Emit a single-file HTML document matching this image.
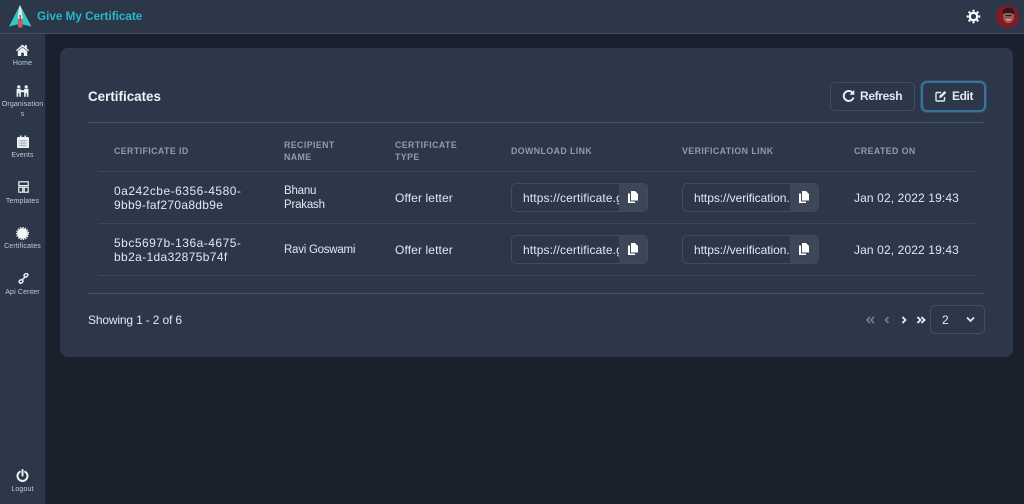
<!DOCTYPE html>
<html><head><meta charset="utf-8">
<style>
*{box-sizing:border-box}
html,body{margin:0;padding:0;width:1024px;height:504px;overflow:hidden;background:#1a202c;font-family:"Liberation Sans",sans-serif;color:#e2e8f0}
.a{position:absolute;white-space:nowrap}
.nav{position:absolute;left:0;width:45px;text-align:center;font-size:7px;line-height:10px;color:#c3ccd8;letter-spacing:.15px}
.nav svg{position:absolute;left:16px;top:0}
.th{position:absolute;font-size:8.8px;font-weight:bold;letter-spacing:.42px;line-height:11.5px;color:#8f9bae;white-space:nowrap}
.td{position:absolute;font-size:12px;line-height:14px;color:#e2e8f0;white-space:nowrap;letter-spacing:.12px}
.hr{position:absolute;height:1px;background:#38495a}
.inp{position:absolute;width:137px;height:29px;border:1px solid #414c5e;border-radius:5px;overflow:hidden;font-size:12px;line-height:29px;color:#e2e8f0;padding-left:11px;white-space:nowrap;letter-spacing:.12px}
.inp b{position:absolute;right:0;top:0;bottom:0;width:28px;background:#3d4758;border-radius:0 5px 5px 0}
.inp svg{position:absolute;right:8px;top:6px}
</style></head><body>

<div class="a" style="left:0;top:0;width:1024px;height:34px;background:#2c3849;border-bottom:1px solid #465062"></div>
<svg class="a" style="left:9px;top:5px" width="23" height="23" viewBox="0 0 23 23">
<path d="M11 0L0 21.500L8 19.500H14L22.500 21.500Z" fill="#2cc9c6"/>
<path d="M11 0C9.500 4 9 8 9 13V22.500H13.500V13C13.500 8 12.800 4 11 0Z" fill="#dfe6e4"/>
<rect x="9" y="14" width="4.500" height="8.500" fill="#c65a68"/><rect x="10.500" y="10" width="1.500" height="5" fill="#b8404f"/>
</svg>
<div class="a" style="left:37px;top:9px;font-size:11.7px;line-height:15px;font-weight:bold;color:#28b6cb">Give My Certificate</div>

<svg class="a" style="left:966px;top:9px" width="15" height="15" viewBox="0 0 15 15"><circle cx="7.500" cy="7.500" r="3.700" fill="#2c3849" stroke="#fff" stroke-width="2.200"/><g stroke="#fff" stroke-width="2.200"><path d="M7.500 .7v2M7.500 12.300v2M.7 7.500h2M12.300 7.500h2M2.700 2.700l1.400 1.400M10.900 10.900l1.400 1.400M2.700 12.300l1.400-1.400M10.900 4.100l1.400-1.400"/></g></svg>
<svg class="a" style="left:996px;top:5px" width="23" height="23" viewBox="0 0 23 23"><circle cx="11.500" cy="11.500" r="11.500" fill="#851826"/><ellipse cx="12.500" cy="11.500" rx="5.500" ry="6.800" fill="#9a5c50"/><path d="M6.500 9C6 4 10 2.500 13 2.500C17 2.500 19 6 18.500 9.500C15 7.500 10 7.500 6.500 9Z" fill="#2a1a1c"/><path d="M9.500 10.500h6" stroke="#2a1a1c" stroke-width="1.100"/><path d="M10 14.800h5" stroke="#e5d5cc" stroke-width="1"/></svg>

<!-- sidebar -->
<div class="a" style="left:0;top:34px;width:46px;height:470px;background:#2c3849;border-right:1px solid #1f2735"></div>

<div class="nav" style="top:44px;height:26px"><svg width="13" height="12" viewBox="0 0 13 12"><path d="M6.500 .5L0 6.200l.9 1L6.500 2.600l5.600 4.600.9-1L10.800 4.300V1H9v1.700Z" fill="#eef1f5"/><path d="M6.500 3.400L1.800 7.300V12H5.200V8.800h2.600V12h3.400V7.300Z" fill="#eef1f5"/></svg><div style="padding-top:14.500px">Home</div></div>

<div class="nav" style="top:85px;height:36px"><svg width="13" height="12" viewBox="0 0 13 12"><g fill="#eef1f5"><circle cx="2.800" cy="1.800" r="1.600"/><circle cx="10.200" cy="1.800" r="1.600"/><rect x=".6" y="3.800" width="4.200" height="4.400"/><rect x="8.200" y="3.800" width="4.200" height="4.400"/><rect x="3.500" y="5.200" width="6" height="2"/><rect x=".6" y="8" width="1.600" height="3.800"/><rect x="10.800" y="8" width="1.600" height="3.800"/><rect x="3.300" y="8" width="1.600" height="3.800"/><rect x="8.100" y="8" width="1.600" height="3.800"/></g></svg><div style="padding-top:14.500px;line-height:10.500px">Organisation<br>s</div></div>

<div class="nav" style="top:135px;height:26px"><svg width="12" height="13" viewBox="0 0 12 13" style="left:17px"><path d="M1 2h2V.5h1.500V2h3V.5H9V2h2a1 1 0 0 1 1 1v9a1 1 0 0 1-1 1H1a1 1 0 0 1-1-1V3a1 1 0 0 1 1-1Z" fill="#eef1f5"/><path d="M1.500 5.500h9M1.500 8h9M1.500 10.500h9M4 5v7M6 5v7M8 5v7" stroke="#8a94a4" stroke-width=".5"/></svg><div style="padding-top:16px">Events</div></div>

<div class="nav" style="top:181px;height:26px"><svg width="11" height="12" viewBox="0 0 11 12" style="left:17.500px"><g fill="none" stroke="#eef1f5" stroke-width="1.200"><rect x=".8" y=".8" width="9.400" height="3.800"/><rect x=".8" y="6.200" width="4" height="5"/><rect x="6.200" y="6.200" width="4" height="5"/></g></svg><div style="padding-top:15.500px">Templates</div></div>

<div class="nav" style="top:227px;height:26px"><svg width="13" height="13" viewBox="0 0 13 13"><circle cx="6.500" cy="6.500" r="5.400" fill="#f2f5f8"/><circle cx="6.500" cy="6.500" r="6.100" fill="none" stroke="#f2f5f8" stroke-width="1.100" stroke-dasharray="1.300 1.300"/></svg><div style="padding-top:15px">Certificates</div></div>

<div class="nav" style="top:273px;height:26px"><svg width="11" height="11" viewBox="0 0 12 12" style="left:17.500px"><g fill="none" stroke="#e6ebf1" stroke-width="1.700"><rect x="6.600" y=".8" width="4.200" height="3.200" rx="1.400" transform="rotate(-40 8.700 2.400)"/><rect x="1.200" y="7.600" width="4.200" height="3.200" rx="1.400" transform="rotate(-40 3.300 9.200)"/><path d="M4.500 7.500L7.500 4.500"/></g></svg><div style="padding-top:14.500px">Api Center</div></div>

<div class="nav" style="top:469px;height:26px"><svg width="13" height="13" viewBox="0 0 13 13"><path d="M3.800 2.800a5 5 0 1 0 5.400 0" fill="none" stroke="#f0f3f7" stroke-width="2" stroke-linecap="round"/><path d="M6.500 1v5.500" stroke="#f0f3f7" stroke-width="2" stroke-linecap="round"/></svg><div style="padding-top:15.500px">Logout</div></div>

<!-- panel -->
<div class="a" style="left:60px;top:48px;width:953px;height:309px;background:#2c3849;border-radius:8px"></div>
<div class="a" style="left:88px;top:88px;font-size:13.400px;line-height:17px;font-weight:bold;color:#edf2f7">Certificates</div>

<div class="a" style="left:830px;top:82px;width:85px;height:29px;border:1px solid #434e60;border-radius:5px"></div>
<svg class="a" style="left:842px;top:89px" width="13" height="14" viewBox="0 0 13 14"><path d="M10.800 4A5 5 0 1 0 11.500 8.500" fill="none" stroke="#edf2f7" stroke-width="1.900"/><path d="M12.300 1V5.800H7.500Z" fill="#edf2f7"/></svg>
<div class="a" style="left:860px;top:89px;font-size:12px;line-height:15px;font-weight:bold;color:#e2e8f0;letter-spacing:-.35px">Refresh</div>

<div class="a" style="left:921px;top:81px;width:65px;height:31px;border:2px solid #3d7399;border-radius:6px;box-shadow:0 0 0 1px #2f4f68"></div>
<svg class="a" style="left:935px;top:90px" width="12" height="12" viewBox="0 0 12 12"><path d="M6 2.500H2a1 1 0 0 0-1 1V10a1 1 0 0 0 1 1h6.500a1 1 0 0 0 1-1V7" fill="none" stroke="#e2e8f0" stroke-width="1.400"/><path d="M4.500 5.800L9.500 1l1.800 1.700L6.300 7.600 4.200 8Z" fill="#e2e8f0"/></svg>
<div class="a" style="left:952px;top:89px;font-size:12px;line-height:15px;font-weight:bold;color:#e2e8f0;letter-spacing:-.4px">Edit</div>

<div class="hr" style="left:88px;top:122px;width:897px;background:#445263"></div>

<div class="th" style="left:114px;top:146px">CERTIFICATE ID</div>
<div class="th" style="left:284px;top:140px">RECIPIENT<br>NAME</div>
<div class="th" style="left:395px;top:140px">CERTIFICATE<br>TYPE</div>
<div class="th" style="left:511px;top:146px">DOWNLOAD LINK</div>
<div class="th" style="left:682px;top:146px">VERIFICATION LINK</div>
<div class="th" style="left:854px;top:146px">CREATED ON</div>

<div class="hr" style="left:98px;top:171px;width:877px"></div>
<div class="hr" style="left:98px;top:223px;width:877px"></div>
<div class="hr" style="left:98px;top:275px;width:877px"></div>

<div class="td" style="left:114px;top:184px;letter-spacing:.49px">0a242cbe-6356-4580-<br><span style="letter-spacing:.3px">9bb9-faf270a8db9e</span></div>
<div class="td" style="left:284px;top:184px;font-size:11.5px;letter-spacing:-.2px">Bhanu<br>Prakash</div>
<div class="td" style="left:395px;top:191px">Offer letter</div>
<div class="inp" style="left:511px;top:183px">https://certificate.g<b></b><svg width="13" height="14" viewBox="0 0 13 14"><path d="M5 1h4l3 3v6.500H5Z" fill="#fff"/><path d="M2 3.500h2V11.500h5V13H2Z" fill="#fff"/></svg></div>
<div class="inp" style="left:682px;top:183px;letter-spacing:-.05px">https://verification.<b></b><svg width="13" height="14" viewBox="0 0 13 14"><path d="M5 1h4l3 3v6.500H5Z" fill="#fff"/><path d="M2 3.500h2V11.500h5V13H2Z" fill="#fff"/></svg></div>
<div class="td" style="left:854px;top:191px">Jan 02, 2022 19:43</div>

<div class="td" style="left:114px;top:236px;letter-spacing:.49px">5bc5697b-136a-4675-<br><span style="letter-spacing:.36px">bb2a-1da32875b74f</span></div>
<div class="td" style="left:284px;top:243px;font-size:11.5px;letter-spacing:-.25px">Ravi Goswami</div>
<div class="td" style="left:395px;top:243px">Offer letter</div>
<div class="inp" style="left:511px;top:235px">https://certificate.g<b></b><svg width="13" height="14" viewBox="0 0 13 14"><path d="M5 1h4l3 3v6.500H5Z" fill="#fff"/><path d="M2 3.500h2V11.500h5V13H2Z" fill="#fff"/></svg></div>
<div class="inp" style="left:682px;top:235px;letter-spacing:-.05px">https://verification.<b></b><svg width="13" height="14" viewBox="0 0 13 14"><path d="M5 1h4l3 3v6.500H5Z" fill="#fff"/><path d="M2 3.500h2V11.500h5V13H2Z" fill="#fff"/></svg></div>
<div class="td" style="left:854px;top:243px">Jan 02, 2022 19:43</div>

<div class="hr" style="left:88px;top:293px;width:897px;background:#445263"></div>
<div class="td" style="left:88px;top:313px;letter-spacing:-.16px">Showing 1 - 2 of 6</div>

<svg class="a" style="left:865px;top:315px" width="64" height="10" viewBox="0 0 64 10" fill="none" stroke-width="1.800">
<g stroke="#6f7b8d"><path d="M5 2L2 5l3 3M9 2L6 5l3 3"/><path d="M23.500 2l-3 3 3 3"/></g>
<g stroke="#eef1f5"><path d="M37.500 2l3 3-3 3"/><path d="M52.500 2l3 3-3 3M56.500 2l3 3-3 3"/></g>
</svg>
<div class="a" style="left:930px;top:305px;width:55px;height:29px;border:1px solid #434e60;border-radius:5px"></div>
<div class="a" style="left:942px;top:313px;font-size:12px;line-height:14px;color:#e2e8f0">2</div>
<svg class="a" style="left:966px;top:316px" width="9" height="7" viewBox="0 0 9 7"><path d="M1 1.500l3.500 3.500L8 1.500" fill="none" stroke="#e2e8f0" stroke-width="1.700"/></svg>

</body></html>
